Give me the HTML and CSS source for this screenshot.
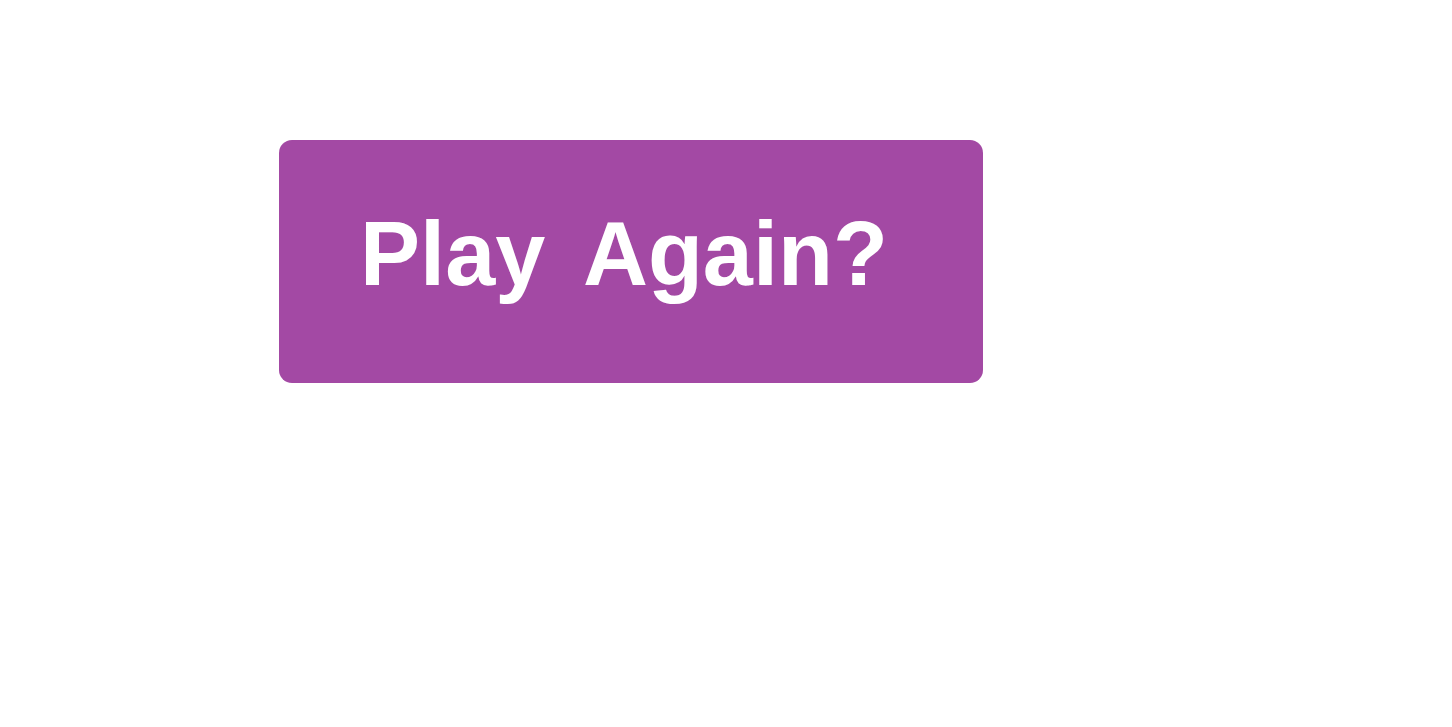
FILE: index.html
```html
<!DOCTYPE html>
<html>
<head>
<meta charset="utf-8">
<link rel="stylesheet" href="styles.css">
</head>
<body>
<div class="page">
  <button class="play-btn"><span class="label">Play Again?</span></button>
</div>
</body>
</html>
```

FILE: styles.css
```css
html, body {
  margin: 0;
  padding: 0;
  background: #ffffff;
}
.page {
  width: 1452px;
  height: 727px;
  padding: 140px 0 0 279px;
  box-sizing: border-box;
}
.play-btn {
  width: 704px;
  height: 243px;
  background: #a349a4;
  border: none;
  border-radius: 13px;
  display: flex;
  align-items: center;
  justify-content: center;
  padding: 0 14px 16px 0;
  margin: 0;
  box-sizing: border-box;
  cursor: pointer;
}
.label {
  color: #ffffff;
  font-family: "Comic Sans MS", "Liberation Sans", sans-serif;
  font-weight: bold;
  font-size: 90px;
  line-height: 1;
  letter-spacing: 0;
  word-spacing: 16px;
}
```
